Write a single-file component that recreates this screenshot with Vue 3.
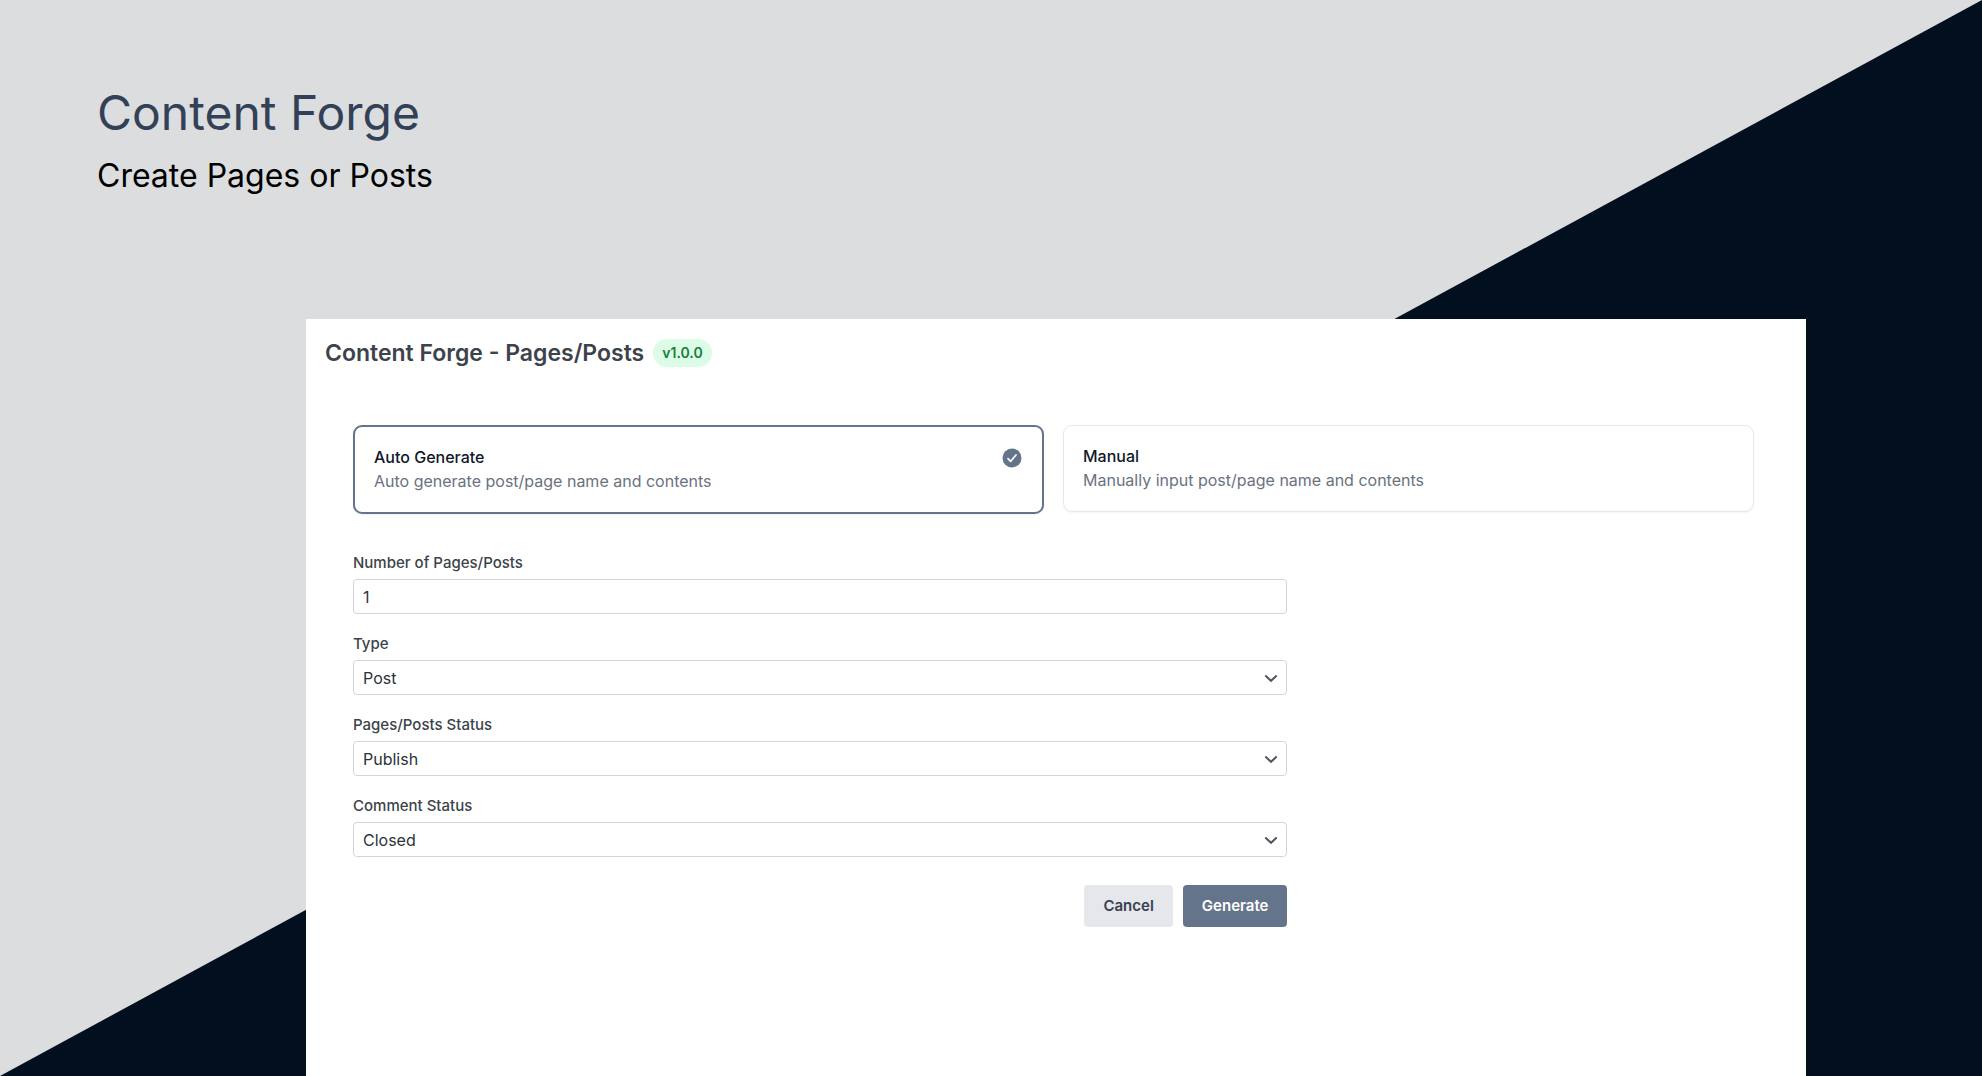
<script setup>
import { reactive, ref } from 'vue'

const mode = ref('auto')
const modes = [
  { value: 'auto', title: 'Auto Generate', text: 'Auto generate post/page name and contents' },
  { value: 'manual', title: 'Manual', text: 'Manually input post/page name and contents' },
]

const form = reactive({ count: 1, type: 'Post', status: 'Publish', comments: 'Closed' })
const selects = [
  { key: 'type', label: 'Type', options: ['Post', 'Page'] },
  { key: 'status', label: 'Pages/Posts Status', options: ['Publish', 'Draft', 'Pending', 'Private'] },
  { key: 'comments', label: 'Comment Status', options: ['Closed', 'Open'] },
]
</script>

<template>
  <div class="stage">
    <header class="intro">
      <h1>Content Forge</h1>
      <p>Create Pages or Posts</p>
    </header>

    <main class="panel">
      <div class="panel-head">
        <h2>Content Forge - Pages/Posts</h2>
        <span class="version">v1.0.0</span>
      </div>

      <form class="content" @submit.prevent>
        <div class="modes" role="radiogroup" aria-label="Generation mode">
          <label v-for="m in modes" :key="m.value" class="mode" :class="{ selected: mode === m.value }">
            <input v-model="mode" class="mode-input" type="radio" name="mode" :value="m.value" />
            <span class="mode-body">
              <span class="mode-title">{{ m.title }}</span>
              <span class="mode-text">{{ m.text }}</span>
            </span>
            <svg v-if="mode === m.value" class="check" viewBox="0 0 20 20" aria-hidden="true">
              <circle cx="10" cy="10" r="9.5" fill="#64748b" />
              <path d="M6 10.6 8.7 13.3 14 7" fill="none" stroke="#fff" stroke-width="1.7" stroke-linecap="round" stroke-linejoin="round" />
            </svg>
          </label>
        </div>

        <div class="fields">
          <div class="field">
            <label for="count">Number of Pages/Posts</label>
            <input id="count" v-model="form.count" class="control" type="number" min="1" />
          </div>
          <div v-for="s in selects" :key="s.key" class="field">
            <label :for="s.key">{{ s.label }}</label>
            <div class="select-wrap">
              <select :id="s.key" v-model="form[s.key]" class="control">
                <option v-for="o in s.options" :key="o">{{ o }}</option>
              </select>
              <svg class="chevron" viewBox="0 0 20 20" aria-hidden="true">
                <path d="m4.3 7.4 5.7 5.4 5.7-5.4" fill="none" stroke="#50575e" stroke-width="2" />
              </svg>
            </div>
          </div>
          <div class="actions">
            <button type="button" class="btn cancel">Cancel</button>
            <button type="submit" class="btn generate">Generate</button>
          </div>
        </div>
      </form>
    </main>
  </div>
</template>

<style>
body {
  margin: 0;
}
</style>

<style scoped>
.stage,
.stage * {
  box-sizing: border-box;
}

.stage {
  position: relative;
  z-index: 0;
  display: flex;
  flex-direction: column;
  min-height: 100vh;
  background: #dcddde;
  color: #3c434a;
  font-family: Inter, "Liberation Sans", sans-serif;
}

.stage::before {
  content: "";
  position: absolute;
  inset: 0;
  z-index: -1;
  background: #020f1f;
  clip-path: polygon(100% 0, 100% 100%, 0 100%);
}

h1,
h2,
p {
  margin: 0;
}

.intro {
  padding: 83px 97px 0;
}

.intro h1 {
  color: #334158;
  font-size: 48px;
  font-weight: 400;
  line-height: 60px;
}

.intro p {
  margin-top: 13px;
  color: #000;
  font-size: 32px;
  line-height: 40px;
}

.panel {
  flex: 1;
  margin: 123px 176px 0 306px;
  padding: 18px 19px 60px;
  background: #fff;
}

.panel-head {
  display: flex;
  align-items: center;
  gap: 9px;
}

.panel-head h2 {
  font-size: 23px;
  font-weight: 600;
  line-height: 32px;
}

.version {
  padding: 0 9px;
  border-radius: 14px;
  background: #dcfce7;
  color: #15803d;
  font-size: 14px;
  font-weight: 600;
  line-height: 28px;
}

.content {
  padding: 56px 33px 0 28px;
}

.modes {
  display: grid;
  grid-template-columns: 1fr 1fr;
  align-items: start;
  gap: 19px;
}

.mode {
  position: relative;
  display: flex;
  justify-content: space-between;
  padding: 19px;
  border: 1px solid #e5e7eb;
  border-radius: 9px;
  box-shadow: 0 1px 2px rgba(0, 0, 0, 0.05);
  cursor: pointer;
}

.mode.selected {
  border: 2px solid #64748b;
}

.mode-input {
  position: absolute;
  inset: 0;
  width: 100%;
  height: 100%;
  margin: 0;
  opacity: 0;
  cursor: pointer;
}

.mode-body {
  display: flex;
  flex-direction: column;
}

.mode-title {
  color: #111827;
  font-size: 16px;
  font-weight: 500;
  line-height: 23px;
}

.mode-text {
  color: #6b7280;
  font-size: 16px;
  line-height: 24px;
}

.check {
  width: 20px;
  height: 20px;
  margin: 2px 1px;
}

.fields {
  display: flex;
  flex-direction: column;
  gap: 21px;
  width: 66.7%;
  margin-top: 40px;
}

.field {
  display: flex;
  flex-direction: column;
  gap: 7px;
}

.field label {
  font-size: 15px;
  font-weight: 500;
  line-height: 18px;
}

.control {
  appearance: none;
  display: block;
  width: 100%;
  height: 35px;
  margin: 0;
  padding: 0 9px;
  border: 1px solid #d1d5db;
  border-radius: 4px;
  background: #fff;
  color: #2c3338;
  font: 16px/24px Inter, "Liberation Sans", sans-serif;
}

.select-wrap {
  position: relative;
}

.chevron {
  position: absolute;
  top: 8px;
  right: 6px;
  width: 20px;
  height: 20px;
  pointer-events: none;
}

.actions {
  display: flex;
  justify-content: flex-end;
  gap: 10px;
  margin-top: 7px;
}

.btn {
  height: 42px;
  padding: 0 19px;
  border: 0;
  border-radius: 4px;
  font: 600 15px/24px Inter, "Liberation Sans", sans-serif;
  cursor: pointer;
}

.cancel {
  background: #e5e7eb;
  color: #374151;
}

.generate {
  background: #64748b;
  color: #fff;
}
</style>
